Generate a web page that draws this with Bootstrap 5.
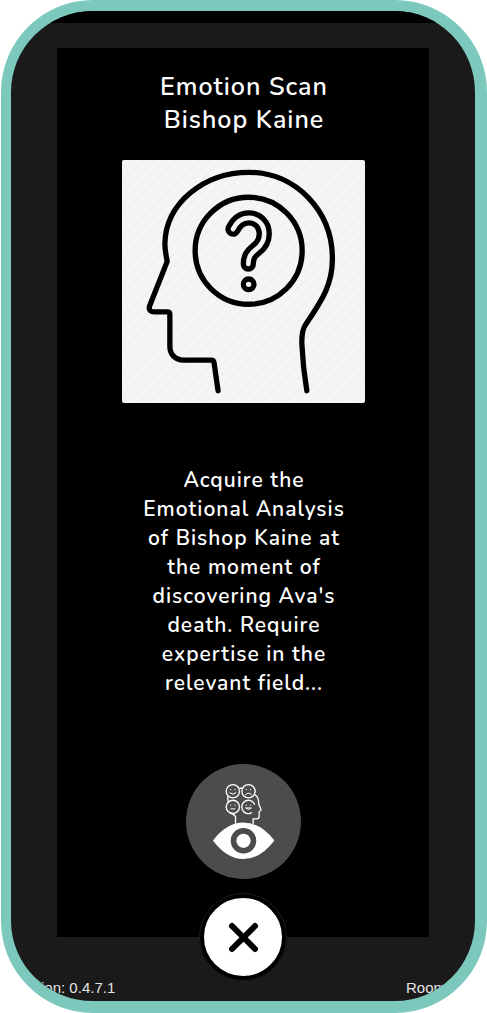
<!DOCTYPE html>
<html lang="en">
<head>
<meta charset="utf-8">
<meta name="viewport" content="width=device-width, initial-scale=1">
<title>Emotion Scan</title>
<link href="https://cdn.jsdelivr.net/npm/bootstrap@5.3.0/dist/css/bootstrap.min.css" rel="stylesheet">
<style>
  body { background: #fff; }
  .device {
    min-height: 100vh;
    margin-left: 1px;
    border: solid #7cc8bc;
    border-width: 11px 12px 12px 10px;
    border-radius: 92px;
    background: #1a1a1a;
  }
  .status-strip { height: 12px; background: #000; }
  .scan-panel {
    width: 80%;
    margin-top: 25px;
    padding: 23px 16px 58px;
    background: #000;
    color: #fff;
    font-family: Nunito, Lato, "Open Sans", sans-serif;
    font-weight: 650;
    letter-spacing: 1px;
  }
  .scan-title { font-size: 25px; line-height: 33px; font-weight: 600; margin-bottom: 23px; padding-left: 2px; }
  .scan-picture {
    width: 243px;
    border-radius: 2px;
    background: repeating-linear-gradient(135deg, #f5f5f5 0 6px, #f1f1f1 6px 8px);
  }
  .scan-text { font-size: 21px; line-height: 29px; margin: 63px 0 66px; padding-left: 2px; }
  .scan-button { width: 115px; height: 115px; background: #4c4c4c; }
  .close-button { width: 88px; height: 88px; border: 5px solid #000; outline: 1px solid #1c1c1c; outline-offset: -1px; background: #fff; }
  .info-bar { height: 64px; padding: 0 29px 1px 0; color: #e4e4e4; font: 15px/24px "Liberation Sans", Arial, sans-serif; }
</style>
</head>
<body>
<div class="device d-flex flex-column align-items-center overflow-hidden">
  <div class="status-strip w-100"></div>
  <main class="scan-panel position-relative flex-grow-1 d-flex flex-column align-items-center text-center">
    <h1 class="scan-title">Emotion Scan<br>Bishop Kaine</h1>
    <svg class="scan-picture" viewBox="20 28 731 731" role="img" aria-label="Head with a question mark" fill="none" stroke="#000" stroke-width="16" stroke-linecap="round" stroke-linejoin="round">
      <path d="M309 722L297 638Q296 630 288 630H205C180 630 164 612 164 588V493Q164 485 156 485H118Q98 485 103 467L156 333C151 308 149 300 149 280C151 160 265 65 402 65C541 65 653 180 653 325C653 400 625 446 573 522Q560 540 561 580Q564 650 576 722"/>
      <circle cx="401" cy="301" r="161"/>
      <path stroke-width="46" d="M354 236C366 212 382 202 401 202C428 202 448 222 448 250C448 273 438 286 423 297C407 310 400 320 400 341"/>
      <path stroke="#f4f4f4" stroke-width="14" d="M354 236C366 212 382 202 401 202C428 202 448 222 448 250C448 273 438 286 423 297C407 310 400 320 400 341"/>
      <circle cx="401" cy="402" r="16"/>
    </svg>
    <p class="scan-text">Acquire the<br>Emotional Analysis<br>of Bishop Kaine at<br>the moment of<br>discovering Ava's<br>death. Require<br>expertise in the<br>relevant field...</p>
    <button type="button" class="scan-button btn rounded-circle border-0 p-0 d-flex" aria-label="Scan emotions">
      <svg class="w-100 h-100" viewBox="17 26 346 346" fill="none" stroke="#fff" stroke-width="4" stroke-linecap="round" stroke-linejoin="round" aria-hidden="true">
        <path d="M166 206V184Q162 177 148 172M144 123Q141 132 145 141M179 99H187M224 119C232 122 236 134 236 146L243 164L237 170V184Q237 191 229 191H219V205"/>
        <circle cx="158" cy="108" r="20"/><circle cx="205" cy="108" r="20"/>
        <circle cx="158" cy="155" r="20"/><path d="M223 147A20 20 0 1 0 214 173"/>
        <path stroke-width="3" d="M149 113Q158 121 167 113M196 118Q205 109 214 118M152 161H164M197 159Q205 167 213 159ZM151 103h1M164 103h1M198 103h1M211 103h1M151 150h1M164 150h1M198 150h1M211 150h1"/>
        <path fill="#fff" stroke="none" d="M98 256Q140 202 190 202Q240 202 283 256Q240 312 190 312Q140 312 98 256Z"/>
        <circle cx="190" cy="257" r="30" stroke="#4c4c4c" stroke-width="17"/>
      </svg>
    </button>
    <button type="button" class="close-button btn rounded-circle p-0 position-absolute top-100 start-50 translate-middle" aria-label="Close">
      <svg class="w-100 h-100 d-block" viewBox="0 0 78 78" stroke="#000" stroke-width="6" stroke-linecap="round" aria-hidden="true"><path d="M28 28L51 51M51 28L28 51"/></svg>
    </button>
  </main>
  <footer class="info-bar w-100 d-flex justify-content-between align-items-end">
    <span>Version: 0.4.7.1</span>
    <span>Room</span>
  </footer>
</div>
<script src="https://cdn.jsdelivr.net/npm/bootstrap@5.3.0/dist/js/bootstrap.bundle.min.js"></script>
</body>
</html>
